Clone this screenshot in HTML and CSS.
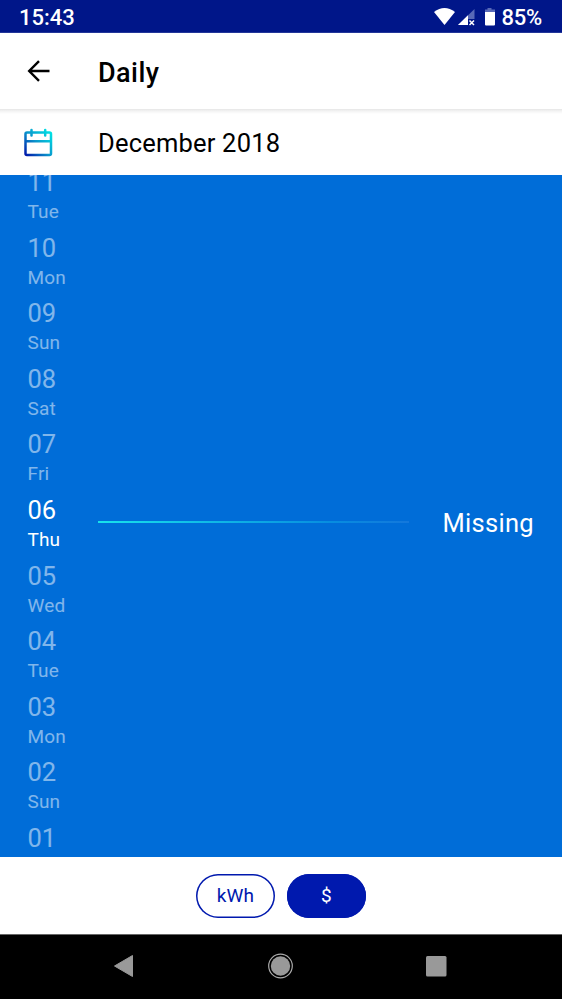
FILE: index.html
```html
<!DOCTYPE html>
<html lang="en">
<head>
<meta charset="utf-8">
<title>Daily</title>
<link rel="stylesheet" href="styles.css">
</head>
<body>
<div class="status">
  <span class="clock">15:43</span>
  <svg class="status-icons" width="64" height="24" viewBox="0 0 64 24">
    <path d="M0 7Q10.500 -1 21 7L10.500 20Z" fill="#fff"/>
    <path d="M24 20L40.500 4V20Z" fill="#5869b7"/>
    <path d="M24 20L34 10.200V20Z" fill="#fff"/>
    <path d="M34 14H42V21H34Z" fill="#001689"/>
    <path d="M35.500 15.500L40 20M40 15.500L35.500 20" stroke="#fff" stroke-width="1.500"/>
    <path d="M53.500 3H57.500V4.500H61V7H51V4.500H53.500Z" fill="#5869b7"/>
    <path d="M51 7H61V19.500Q61 20.500 60 20.500H52Q51 20.500 51 19.500Z" fill="#fff"/>
  </svg>
  <span class="battery">85%</span>
</div>
<header class="bar">
  <svg class="back" width="24" height="22" viewBox="0 0 24 22">
    <path d="M22.500 11H2M12 1.200L2.200 11L12 20.800" fill="none" stroke="#000" stroke-width="2.400"/>
  </svg>
  <h1 class="title">Daily</h1>
</header>
<div class="month">
  <svg class="calendar" width="30" height="30" viewBox="0 0 30 30">
    <defs>
      <linearGradient id="cal" gradientUnits="userSpaceOnUse" x1="1" y1="28" x2="27" y2="3">
        <stop offset="0" stop-color="#0010a8"/>
        <stop offset=".5" stop-color="#0a97cc"/>
        <stop offset="1" stop-color="#00e6e6"/>
      </linearGradient>
    </defs>
    <path d="M3 4.500H25.500Q27 4.500 27 6V25.500Q27 27 25.500 27H3Q1.500 27 1.500 25.500V6Q1.500 4.500 3 4.500ZM1.500 13.300H27M7.500 2V7.500M21.200 2V7.500" fill="none" stroke="url(#cal)" stroke-width="2.500" stroke-linecap="round"/>
  </svg>
  <span class="month-name">December 2018</span>
</div>
<main class="chart">
  <div class="day"><div class="date"><b>11</b><i>Tue</i></div></div>
  <div class="day"><div class="date"><b>10</b><i>Mon</i></div></div>
  <div class="day"><div class="date"><b>09</b><i>Sun</i></div></div>
  <div class="day"><div class="date"><b>08</b><i>Sat</i></div></div>
  <div class="day"><div class="date"><b>07</b><i>Fri</i></div></div>
  <div class="day selected"><div class="date"><b>06</b><i>Thu</i></div><div class="line"></div><span class="value">Missing</span></div>
  <div class="day"><div class="date"><b>05</b><i>Wed</i></div></div>
  <div class="day"><div class="date"><b>04</b><i>Tue</i></div></div>
  <div class="day"><div class="date"><b>03</b><i>Mon</i></div></div>
  <div class="day"><div class="date"><b>02</b><i>Sun</i></div></div>
  <div class="day"><div class="date"><b>01</b></div></div>
</main>
<div class="units">
  <button class="unit">kWh</button>
  <button class="unit active">$</button>
</div>
<nav class="nav">
  <svg width="26" height="26" viewBox="0 0 26 26"><path d="M2.500 13L20.500 2.500V23.500Z" fill="#999" stroke="#999" stroke-linejoin="round"/></svg>
  <svg width="26" height="26" viewBox="0 0 26 26"><circle cx="12.500" cy="13" r="9.700" fill="#999"/><circle cx="12.500" cy="13" r="11.800" fill="none" stroke="#aaa" stroke-width="1.200"/></svg>
  <svg width="26" height="26" viewBox="0 0 26 26"><rect x="2" y="3" width="20.500" height="20.500" rx="1.500" fill="#999"/></svg>
</nav>
</body>
</html>
```
FILE: styles.css
```css
* { box-sizing: border-box; }
body {
  margin: 0;
  width: 562px;
  height: 999px;
  overflow: hidden;
  display: flex;
  flex-direction: column;
  background: #fff;
  color: #000;
  font-family: Roboto, "Liberation Sans", sans-serif;
}
svg { display: block; flex: none; }
.status {
  flex: none;
  height: 33px;
  display: flex;
  align-items: center;
  padding: 2px 20px 0 19px;
  background: #001689;
  border-bottom: 1px solid #233699;
  color: #fff;
  font-size: 22px;
  font-weight: 500;
}
.status-icons { margin-left: auto; }
.battery { margin-left: 3px; letter-spacing: -.2px; }
.bar {
  flex: none;
  height: 76px;
  display: flex;
  align-items: center;
  padding: 1px 0 0 27px;
}
.back { margin-top: -2px; }
.title {
  margin: 3px 0 0 47px;
  font-size: 27px;
  font-weight: 500;
  letter-spacing: .45px;
}
.month {
  flex: none;
  height: 66px;
  display: flex;
  align-items: center;
  padding-left: 24px;
  background: linear-gradient(#e6e6e6, #f3f3f3 2px, #fff 5px);
}
.calendar { margin-top: 1px; }
.month-name {
  margin: 2px 0 0 44px;
  font-size: 25.500px;
  letter-spacing: .2px;
}
.chart {
  flex: none;
  height: 682px;
  overflow: hidden;
  background: #006dd8;
  color: #fff;
}
.day {
  height: 65.600px;
  display: flex;
  align-items: flex-start;
  padding: 0 28px;
}
.day:first-child { margin-top: -9px; }
.date { width: 70px; opacity: .5; }
.selected .date { opacity: 1; }
.date b, .date i {
  display: block;
  font-weight: 400;
  font-style: normal;
}
.date b { font-size: 25.500px; line-height: 32px; margin-left: -.5px; }
.date i { margin-top: 2px; font-size: 19px; line-height: 24px; letter-spacing: .15px; margin-left: -.5px; }
.line {
  width: 311px;
  height: 2px;
  margin-top: 27px;
  background: linear-gradient(90deg, #18e2ec, #078de0 75%, #1478dc);
}
.value {
  margin: 13px 0 0 auto;
  font-size: 25.500px;
  line-height: 32px;
  letter-spacing: .3px;
}
.units {
  flex: none;
  height: 77px;
  display: flex;
  justify-content: center;
  align-items: center;
  gap: 12px;
}
.unit {
  width: 79px;
  height: 44px;
  padding: 0 0 1px;
  border: 0;
  box-shadow: inset 0 0 0 1.500px #0019ae;
  border-radius: 22px;
  background: #fff;
  color: #0019ae;
  font: 400 19px Roboto, "Liberation Sans", sans-serif;
  letter-spacing: .2px;
}
.active { background: #0019ae; color: #fff; }
.nav {
  flex: 1;
  display: flex;
  justify-content: center;
  align-items: center;
  gap: 130px;
  padding: 0 1px 2px 0;
  background: #000;
  border-top: 1px solid #666;
}
```
